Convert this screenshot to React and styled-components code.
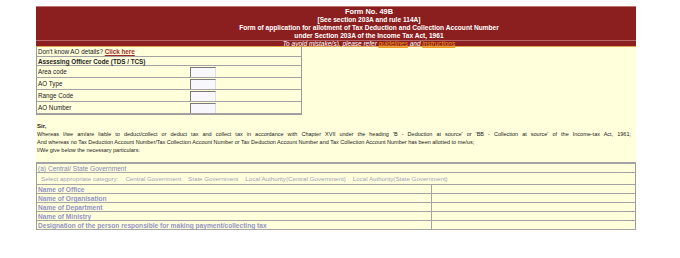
import React from "react";
import styled, { createGlobalStyle } from "styled-components";

const GlobalStyle = createGlobalStyle`
  body {
    margin: 0;
    background: #ffffff;
    font-family: "Liberation Sans", Arial, sans-serif;
  }
`;

const Page = styled.div`
  margin: 6px 0 0 36px;
  width: 600px;
  height: 224px;
  overflow: hidden;
  background: #ffffdc;
`;

const Header = styled.div`
  background: #8b1f1f;
  border-top: 1px solid #c47474;
  border-bottom: 1px solid #e3a34a;
  color: #ffffff;
`;

const TitleBlock = styled.div`
  height: 33px;
  padding-left: 66px;
  text-align: center;
  font-weight: bold;
  border-bottom: 1px solid #b86a6a;
`;

const Title = styled.div`
  font-size: 7.4px;
  line-height: 9px;
`;

const SubLine = styled.div`
  font-size: 6.6px;
  line-height: 8px;
  white-space: nowrap;
`;

const Note = styled.div`
  height: 5px;
  padding-left: 66px;
  text-align: center;
  font-size: 6.5px;
  line-height: 5px;
  font-style: italic;
  white-space: nowrap;
`;

const NoteLink = styled.a`
  color: #f39a1a;
  text-decoration: underline;
`;

const AoTable = styled.div`
  width: 264px;
  border: 1px solid #9c9c9c;
  border-top: none;
`;

const AoRow = styled.div`
  display: flex;
  align-items: center;
  height: ${(p) => p.$h}px;
  border-bottom: 1px solid #a4a4a4;
  font-size: 6.3px;
  font-weight: ${(p) => (p.$bold ? "bold" : "normal")};
  color: #222;
  padding-left: 1px;
  white-space: nowrap;
`;

const AoLabel = styled.div`
  width: 152px;
`;

const CodeBox = styled.div`
  width: 26px;
  height: 10px;
  background: #f8f8fc;
  border-top: 1px solid #7a7a7a;
  border-left: 1px solid #7a7a7a;
  border-right: 1px solid #dedede;
  box-sizing: border-box;
`;

const HelpLink = styled.a`
  color: #9b2b2b;
  font-weight: bold;
  text-decoration: underline;
`;

const Para = styled.div`
  margin-top: 7px;
  padding: 0 5px 0 1px;
  font-size: 5.5px;
  line-height: 8px;
  color: #1a1a1a;
  white-space: nowrap;
`;

const Sir = styled.div`
  font-weight: bold;
  font-size: 6px;
`;

const JustLine = styled.div`
  white-space: normal;
  text-align: justify;
  text-align-last: justify;
`;

const CatTable = styled.div`
  margin-top: 8px;
  border: 1px solid #9c9c9c;
  border-top: 2px solid #a4a4a4;
`;

const CatRow = styled.div`
  display: flex;
  align-items: center;
  height: ${(p) => p.$h}px;
  border-bottom: 1px solid #a4a4a4;
  padding-left: ${(p) => p.$indent || 1}px;
  font-size: ${(p) => p.$size || 6.6}px;
  font-weight: ${(p) => (p.$bold ? "bold" : "normal")};
  color: ${(p) => p.$color || "#8686b2"};
  white-space: nowrap;
`;

const NameCell = styled.div`
  width: 393px;
  height: 100%;
  display: flex;
  align-items: center;
  border-right: 1px solid #a4a4a4;
`;

const Choice = styled.span`
  margin-right: 7px;
`;

const names = [
  "Name of Office",
  "Name of Organisation",
  "Name of Department",
  "Name of Ministry",
  "Designation of the person responsible for making payment/collecting tax",
];

const categories = [
  "Central Government",
  "State Government",
  "Local Authority(Central Government)",
  "Local Authority(State Government)",
];

export default function App() {
  return (
    <>
      <GlobalStyle />
      <Page>
        <Header>
          <TitleBlock>
            <Title>Form No. 49B</Title>
            <SubLine>[See section 203A and rule 114A]</SubLine>
            <SubLine>
              Form of application for allotment of Tax Deduction and Collection Account Number
            </SubLine>
            <SubLine>under Section 203A of the Income Tax Act, 1961</SubLine>
          </TitleBlock>
          <Note>
            To avoid mistake(s), please refer <NoteLink>guidelines</NoteLink> and{" "}
            <NoteLink>instructions</NoteLink>
          </Note>
        </Header>

        <AoTable>
          <AoRow $h={9}>
            Don't know AO details?&nbsp;<HelpLink>Click here</HelpLink>
          </AoRow>
          <AoRow $h={8} $bold>
            Assessing Officer Code (TDS / TCS)
          </AoRow>
          {["Area code", "AO Type", "Range Code", "AO Number"].map((label) => (
            <AoRow key={label} $h={11}>
              <AoLabel>{label}</AoLabel>
              <CodeBox />
            </AoRow>
          ))}
        </AoTable>

        <Para>
          <Sir>Sir,</Sir>
          <JustLine>
            Whereas I/we am/are liable to deduct/collect or deduct tax and collect tax in accordance
            with Chapter XVII under the heading 'B - Deduction at source' or 'BB - Collection at
            source' of the Income-tax Act, 1961;
          </JustLine>
          <div>
            And whereas no Tax Deduction Account Number/Tax Collection Account Number or Tax
            Deduction Account Number and Tax Collection Account Number has been allotted to me/us;
          </div>
          <div>I/We give below the necessary particulars:</div>
        </Para>

        <CatTable>
          <CatRow $h={8}>(a) Central/ State Government</CatRow>
          <CatRow $h={11} $indent={4} $size={6.2} $color="#a2a2c0">
            <Choice>Select appropriate category:</Choice>
            {categories.map((c) => (
              <Choice key={c}>{c}</Choice>
            ))}
          </CatRow>
          {names.map((n) => (
            <CatRow key={n} $h={8} $bold $color="#9494c8">
              <NameCell>{n}</NameCell>
            </CatRow>
          ))}
          <CatRow $h={8} />
        </CatTable>
      </Page>
    </>
  );
}
